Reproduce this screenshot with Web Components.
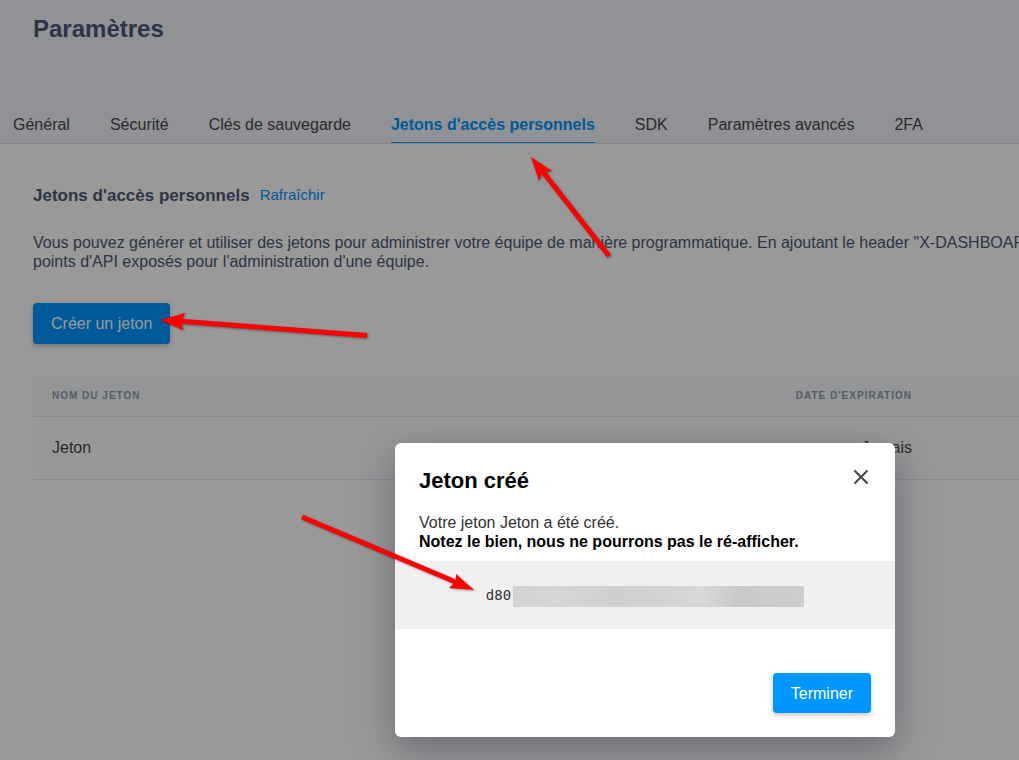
<!DOCTYPE html>
<html lang="fr">
<head>
<meta charset="utf-8">
<title>Paramètres</title>
<style>
  html, body { margin: 0; min-height: 100vh; overflow: hidden; }
  body { position: relative; background: #fff; font: 16px/19px "Liberation Sans", Arial, sans-serif; color: #333; }
</style>
</head>
<body>
<settings-header>
  Paramètres
  <settings-tabs slot="tabs">
    <settings-tab>Général</settings-tab>
    <settings-tab>Sécurité</settings-tab>
    <settings-tab>Clés de sauvegarde</settings-tab>
    <settings-tab active>Jetons d'accès personnels</settings-tab>
    <settings-tab>SDK</settings-tab>
    <settings-tab>Paramètres avancés</settings-tab>
    <settings-tab>2FA</settings-tab>
  </settings-tabs>
</settings-header>
<token-panel></token-panel>
<modal-layer>
  <token-dialog heading="Jeton créé" token="d80"></token-dialog>
</modal-layer>
<guide-arrows></guide-arrows>

<script>
function define(name, markup, setup) {
  const template = document.createElement('template');
  template.innerHTML = markup;
  customElements.define(name, class extends HTMLElement {
    constructor() {
      super();
      this.attachShadow({ mode: 'open' }).append(template.content.cloneNode(true));
    }
    connectedCallback() { if (setup) setup(this, this.shadowRoot); }
  });
}

define('settings-header', `
  <style>
    :host { display: block; background: #f1f3f8; border-bottom: 1px solid #dcdfe9; }
    h1 { margin: 0; padding: 15px 33px 0; font-size: 24px; line-height: 28px; color: #4b5878; }
    nav { padding-top: 63px; }
  </style>
  <h1><slot></slot></h1>
  <nav><slot name="tabs"></slot></nav>`);

define('settings-tabs', `
  <style>:host { display: flex; gap: 40px; padding-left: 13px; white-space: nowrap; }</style>
  <slot></slot>`);

define('settings-tab', `
  <style>
    :host { display: block; }
    a { display: block; padding: 9px 0 8px; border-bottom: 1px solid transparent; color: #474747; text-decoration: none; }
    :host([active]) a { color: #0096ff; border-color: #0096ff; font-weight: bold; }
  </style>
  <a href="#"><slot></slot></a>`);

define('app-button', `
  <style>
    :host { display: inline-block; }
    button { font: inherit; color: #fff; background: #0096ff; border: 0; border-radius: 4px; padding: 0 18px; height: var(--button-height, 40px); box-shadow: 0 2px 5px rgba(50, 60, 90, .3); display: block; }
  </style>
  <button type="button"><slot></slot></button>`);

define('token-table', `
  <style>
    :host { display: block; }
    table { width: 100%; border-collapse: collapse; }
    th { height: 40px; padding: 0 19px; font-size: 10px; line-height: 12px; letter-spacing: 1px; text-transform: uppercase; text-align: left; color: #8c9bb0; background: #f6f8fc; border-bottom: 1px solid #e4e7ee; }
    td { height: 60px; padding: 0 19px 2px; color: #474747; background: #fcfefe; border-bottom: 1px solid #e4e7ee; }
    .date { width: 160px; text-align: right; }
    .rest { width: 88px; padding: 0; }
  </style>
  <table>
    <thead><tr><th>Nom du jeton</th><th class="date">Date d'expiration</th><th class="rest"></th></tr></thead>
    <tbody><tr><td>Jeton</td><td class="date">Jamais</td><td class="rest"></td></tr></tbody>
  </table>`);

define('token-panel', `
  <style>
    :host { display: block; padding: 42px 0 0 33px; color: #4b5878; }
    .title { display: flex; align-items: flex-start; gap: 10px; height: 20px; }
    h2 { margin: 0; font-size: 17px; line-height: 20px; }
    a { font-size: 15px; line-height: 18px; color: #0096ff; text-decoration: none; }
    p { margin: 27px 0 32px; white-space: nowrap; }
    app-button { --button-height: 41px; margin-bottom: 32px; }
  </style>
  <div class="title"><h2>Jetons d'accès personnels</h2><a href="#">Rafraîchir</a></div>
  <p>Vous pouvez générer et utiliser des jetons pour administrer votre équipe de manière programmatique. En ajoutant le header "X-DASHBOAR<br>points d'API exposés pour l'administration d'une équipe.</p>
  <app-button>Créer un jeton</app-button>
  <token-table></token-table>`);

define('modal-layer', `
  <style>
    :host { position: absolute; inset: 0; background: rgba(0, 0, 0, .4); display: flex; flex-direction: column; align-items: flex-end; justify-content: flex-end; padding: 0 124px 23px 0; }
  </style>
  <slot></slot>`);

define('token-dialog', `
  <style>
    :host { display: block; width: 500px; max-width: 100%; border-radius: 6px; background: #fff; color: #333; box-shadow: 0 12px 36px rgba(60, 60, 80, .5); }
    header { display: flex; justify-content: space-between; align-items: flex-start; padding: 24px 24px 0; height: 28px; }
    h2 { margin: 0; font-size: 22px; line-height: 28px; color: #000; }
    .close { width: 20px; height: 20px; padding: 0; border: 0; background: none; display: grid; place-items: center; }
    p { margin: 0; padding: 18px 24px 10px; }
    strong { color: #000; }
    .token { display: flex; justify-content: center; align-items: center; gap: 2px; height: 68px; background: #f0f0f0; }
    code { font: 14px/20px "DejaVu Sans Mono", monospace; }
    .mask { width: 291px; height: 21px; margin-top: 2px; background: linear-gradient(90deg, #d2d2d2, #d6d6d6 15%, #cfcfcf 35%, #d2d2d2 50%, #d8d8d8 65%, #c9c9c9 77%, #cecece); }
    footer { display: flex; justify-content: flex-end; padding: 44px 24px 24px; }
  </style>
  <header><h2></h2><button class="close" type="button" aria-label="Fermer">
    <svg width="16" height="16" viewBox="0 0 16 16" fill="none" stroke="#444" stroke-width="2"><path d="M1.5 1.5l13 13M14.500 1.500l-13 13"/></svg></button></header>
  <p>Votre jeton Jeton a été créé.<br><strong>Notez le bien, nous ne pourrons pas le ré-afficher.</strong></p>
  <div class="token"><code></code><span class="mask"></span></div>
  <footer><app-button>Terminer</app-button></footer>`,
  (host, root) => {
    root.querySelector('h2').textContent = host.getAttribute('heading');
    root.querySelector('code').textContent = host.getAttribute('token');
  });

define('guide-arrows', `
  <style>
    :host { position: absolute; inset: 0; pointer-events: none; }
    svg { display: block; filter: drop-shadow(1px 1px 1px rgba(0, 0, 0, .4)); }
  </style>
  <svg width="1019" height="760" viewBox="0 0 1019 760" fill="red" stroke="red" aria-hidden="true">
    <path d="M609 256L543 172" stroke-width="5"/><path stroke="none" d="M531 157L552 171L545 172L541 175L539 181Z"/>
    <path d="M367 335.500L178 321" stroke-width="5"/><path stroke="none" d="M160 320L185 313L181 321L183 330Z"/>
    <path d="M302 517L458 583" stroke-width="5"/><path stroke="none" d="M474 590L456 574L456 581L449 588Z"/>
  </svg>`);
</script>
</body>
</html>
